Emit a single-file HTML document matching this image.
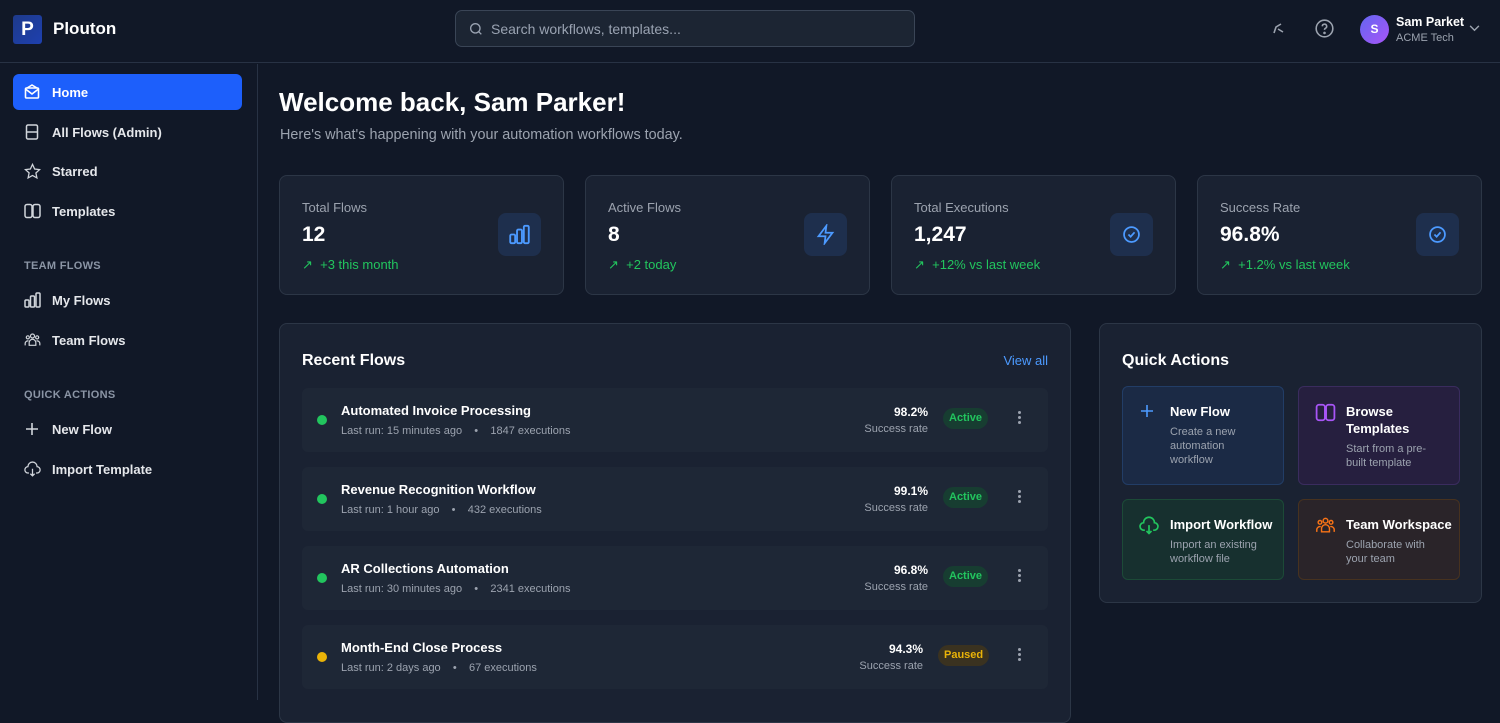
<!DOCTYPE html>
<html><head><meta charset="utf-8"><style>
*{box-sizing:border-box;margin:0;padding:0}
body{width:1500px;height:700px;overflow:hidden;background:#111827;font-family:"Liberation Sans",sans-serif;color:#fff;position:relative}
.hdr{position:absolute;left:0;top:0;width:1500px;height:63px;border-bottom:1px solid #283244;background:#111827}
.logo{position:absolute;left:13px;top:15px;width:29px;height:29px;background:linear-gradient(135deg,#1e3a8a,#1e40af);border-radius:3px;font-weight:bold;font-size:19px;text-align:center;line-height:29px}
.brand{position:absolute;left:53px;top:19px;font-size:17px;font-weight:bold}
.search{position:absolute;left:455px;top:10px;width:460px;height:37px;border:1px solid #3a4556;border-radius:7px;background:#1c2533;color:#9aa3b2;font-size:14px;padding:10px 0 0 35px}
.side{position:absolute;left:0;top:64px;width:258px;height:636px;border-right:1px solid #283244}
.nav{position:absolute;left:13px;width:229px;height:36px;border-radius:6px;font-size:13px;font-weight:bold;color:#e5e7eb;padding:11px 0 0 39px}
.nav svg{position:absolute;left:11px;top:10px}
.nav.act{background:#1d5ffb;color:#fff}
.sec{position:absolute;left:24px;font-size:11px;font-weight:bold;color:#8b95a5;letter-spacing:.3px}
.card{position:absolute;background:#1a2232;border:1px solid #2c3646;border-radius:8px}
.stl{position:absolute;left:22px;top:24px;font-size:13px;color:#9ca3af}
.stv{position:absolute;left:22px;top:47px;font-size:21px;font-weight:bold}
.stc{position:absolute;left:22px;top:81px;font-size:13px;color:#22c55e}
.sti{position:absolute;right:22px;top:37px;width:43px;height:43px;border-radius:8px;background:#1e2f4d}
.sti svg{position:absolute;left:11px;top:11px}
.row{position:absolute;left:22px;width:746px;height:64px;background:#1e2736;border-radius:6px}
.dot{position:absolute;left:15px;top:27px;width:10px;height:10px;border-radius:50%}
.rn{position:absolute;left:39px;top:15px;font-size:13px;font-weight:bold}
.rm{position:absolute;left:39px;top:37px;font-size:11px;color:#9ca3af}
.rp{position:absolute;right:120px;top:17px;font-size:12px;font-weight:bold;text-align:right}
.rs{position:absolute;right:120px;top:35px;font-size:11px;color:#9ca3af}
.badge{position:absolute;top:20px;height:21px;border-radius:11px;font-size:11px;font-weight:bold;padding:4px 6px 0}
.kb{position:absolute;right:26px;top:23px;width:4px}
.kb i{display:block;width:3px;height:3px;background:#9ca3af;border-radius:50%;margin-bottom:2px}
.qa{position:absolute;border-radius:6px;border:1px solid}
.qa svg{position:absolute;left:16px;top:16px}
.qt{position:absolute;left:47px;top:16px;font-size:13px;font-weight:bold;line-height:17px}
.qd{position:absolute;left:47px;font-size:11px;color:#9ca3af;line-height:14px}
</style></head><body>
<div class="hdr">
<div class="logo">P</div><div class="brand">Plouton</div>
<div class="search"><svg style="position:absolute;left:12px;top:10px" width="16" height="16" viewBox="0 0 24 24" fill="none" stroke="#9aa3b2" stroke-width="2"><circle cx="11" cy="11" r="7"/><path d="M20 20l-4-4"/></svg>Search workflows, templates...</div>
<svg style="position:absolute;left:1271px;top:20px" width="16" height="16" viewBox="0 0 16 16" fill="none" stroke="#9ca3af" stroke-width="1.6"><path d="M3 13l2-6 5-3M7 9l5 3"/></svg>
<svg style="position:absolute;left:1314px;top:18px" width="21" height="21" viewBox="0 0 24 24" fill="none" stroke="#9ca3af" stroke-width="1.8"><circle cx="12" cy="12" r="9.5"/><path d="M9.5 9.5a2.5 2.5 0 1 1 3.5 2.3c-.7.4-1 .9-1 1.7"/><circle cx="12" cy="17" r=".6" fill="#9ca3af"/></svg>
<div style="position:absolute;left:1360px;top:15px;width:29px;height:29px;border-radius:50%;background:linear-gradient(135deg,#6366f1,#a855f7);text-align:center;line-height:29px;font-size:12px;font-weight:bold">S</div>
<div style="position:absolute;left:1396px;top:15px;font-size:12.5px;font-weight:bold">Sam Parket</div>
<div style="position:absolute;left:1396px;top:32px;font-size:11px;color:#9ca3af">ACME Tech</div>
<svg style="position:absolute;left:1469px;top:25px" width="11" height="7" viewBox="0 0 12 8" fill="none" stroke="#9ca3af" stroke-width="1.6"><path d="M1 1l5 5 5-5"/></svg>
</div>
<div class="side">
<div class="nav act" style="top:10px"><svg width="16" height="16" viewBox="0 0 16 16" fill="none" stroke="#fff" stroke-width="1.6"><rect x="1.5" y="4" width="13" height="10" rx="1"/><path d="M1.5 5l6.5 5 6.5-5M3 4l5-3 5 3"/></svg>Home</div>
<div class="nav" style="top:50px"><svg width="16" height="16" viewBox="0 0 16 16" fill="none" stroke="#d1d5db" stroke-width="1.5"><rect x="2.5" y="1" width="11" height="14" rx="1.5"/><path d="M2.5 8h11"/></svg>All Flows (Admin)</div>
<div class="nav" style="top:89px"><svg width="17" height="17" viewBox="0 0 24 24" fill="none" stroke="#d1d5db" stroke-width="1.8"><path d="M12 2l3 6.5 7 .8-5.2 4.8 1.4 7L12 17.6 5.8 21l1.4-7L2 9.3l7-.8z"/></svg>Starred</div>
<div class="nav" style="top:129px"><svg width="17" height="16" viewBox="0 0 17 16" fill="none" stroke="#d1d5db" stroke-width="1.5"><rect x="1" y="1.5" width="7" height="13" rx="2"/><rect x="9" y="1.5" width="7" height="13" rx="2"/></svg>Templates</div>
<div class="sec" style="top:196px">TEAM FLOWS</div>
<div class="nav" style="top:218px"><svg width="17" height="16" viewBox="0 0 17 16" fill="none" stroke="#d1d5db" stroke-width="1.5"><rect x="1" y="8" width="4" height="7" rx="1"/><rect x="6.5" y="4" width="4" height="11" rx="1"/><rect x="12" y="1" width="4" height="14" rx="1"/></svg>My Flows</div>
<div class="nav" style="top:258px"><svg width="17" height="16" viewBox="0 0 24 24" fill="none" stroke="#d1d5db" stroke-width="1.8"><circle cx="12" cy="6" r="3"/><circle cx="5" cy="8" r="2.3"/><circle cx="19" cy="8" r="2.3"/><path d="M7 20v-4a5 5 0 0 1 10 0v4zM1 20v-3a4 4 0 0 1 5-3.5M23 20v-3a4 4 0 0 0-5-3.5"/></svg>Team Flows</div>
<div class="sec" style="top:325px">QUICK ACTIONS</div>
<div class="nav" style="top:347px"><svg width="16" height="16" viewBox="0 0 16 16" fill="none" stroke="#d1d5db" stroke-width="1.6"><path d="M8 2v12M2 8h12"/></svg>New Flow</div>
<div class="nav" style="top:387px"><svg width="17" height="17" viewBox="0 0 24 24" fill="none" stroke="#d1d5db" stroke-width="1.8"><path d="M7 17H6a4.5 4.5 0 0 1-.5-9 6.5 6.5 0 0 1 13 0A4.5 4.5 0 0 1 18 17h-1"/><path d="M12 11v10M9 18l3 3 3-3"/></svg>Import Template</div>
</div>

<div style="position:absolute;left:279px;top:87px;font-size:26px;font-weight:bold">Welcome back, Sam Parker!</div>
<div style="position:absolute;left:280px;top:127px;font-size:14.4px;color:#9ca3af">Here's what's happening with your automation workflows today.</div>

<div class="card" style="left:279px;top:175px;width:285px;height:120px"><div class="stl">Total Flows</div><div class="stv">12</div><div class="stc">↗&nbsp; +3 this month</div><div class="sti"><svg width="21" height="21" viewBox="0 0 17 16" fill="none" stroke="#4c9aff" stroke-width="1.5"><rect x="1" y="8" width="4" height="7" rx="1"/><rect x="6.5" y="4" width="4" height="11" rx="1"/><rect x="12" y="1" width="4" height="14" rx="1"/></svg></div></div>
<div class="card" style="left:585px;top:175px;width:285px;height:120px"><div class="stl">Active Flows</div><div class="stv">8</div><div class="stc">↗&nbsp; +2 today</div><div class="sti"><svg width="21" height="21" viewBox="0 0 24 24" fill="none" stroke="#4c9aff" stroke-width="2"><path d="M13 2L4 14h8l-1 8 9-12h-8z"/></svg></div></div>
<div class="card" style="left:891px;top:175px;width:285px;height:120px"><div class="stl">Total Executions</div><div class="stv">1,247</div><div class="stc">↗&nbsp; +12% vs last week</div><div class="sti"><svg width="21" height="21" viewBox="0 0 24 24" fill="none" stroke="#4c9aff" stroke-width="2"><circle cx="12" cy="12" r="8.5"/><path d="M8.5 12l2.5 2.5 4.5-5"/></svg></div></div>
<div class="card" style="left:1197px;top:175px;width:285px;height:120px"><div class="stl">Success Rate</div><div class="stv">96.8%</div><div class="stc">↗&nbsp; +1.2% vs last week</div><div class="sti"><svg width="21" height="21" viewBox="0 0 24 24" fill="none" stroke="#4c9aff" stroke-width="2"><circle cx="12" cy="12" r="8.5"/><path d="M8.5 12l2.5 2.5 4.5-5"/></svg></div></div>

<div class="card" style="left:279px;top:323px;width:792px;height:400px">
<div style="position:absolute;left:22px;top:28px;font-size:16px;font-weight:bold">Recent Flows</div>
<div style="position:absolute;right:22px;top:29px;font-size:13px;color:#4c9aff">View all</div>
<div class="row" style="top:64px"><div class="dot" style="background:#22c55e"></div><div class="rn">Automated Invoice Processing</div><div class="rm">Last run: 15 minutes ago &nbsp;&nbsp; • &nbsp;&nbsp; 1847 executions</div><div class="rp">98.2%</div><div class="rs">Success rate</div><div class="badge" style="left:641px;background:#173d31;color:#22c55e">Active</div><div class="kb"><i></i><i></i><i></i></div></div>
<div class="row" style="top:143px"><div class="dot" style="background:#22c55e"></div><div class="rn">Revenue Recognition Workflow</div><div class="rm">Last run: 1 hour ago &nbsp;&nbsp; • &nbsp;&nbsp; 432 executions</div><div class="rp">99.1%</div><div class="rs">Success rate</div><div class="badge" style="left:641px;background:#173d31;color:#22c55e">Active</div><div class="kb"><i></i><i></i><i></i></div></div>
<div class="row" style="top:222px"><div class="dot" style="background:#22c55e"></div><div class="rn">AR Collections Automation</div><div class="rm">Last run: 30 minutes ago &nbsp;&nbsp; • &nbsp;&nbsp; 2341 executions</div><div class="rp">96.8%</div><div class="rs">Success rate</div><div class="badge" style="left:641px;background:#173d31;color:#22c55e">Active</div><div class="kb"><i></i><i></i><i></i></div></div>
<div class="row" style="top:301px"><div class="dot" style="background:#eab308"></div><div class="rn">Month-End Close Process</div><div class="rm">Last run: 2 days ago &nbsp;&nbsp; • &nbsp;&nbsp; 67 executions</div><div class="rp" style="right:125px">94.3%</div><div class="rs" style="right:125px">Success rate</div><div class="badge" style="left:636px;background:#3a3220;color:#eab308">Paused</div><div class="kb"><i></i><i></i><i></i></div></div>
</div>

<div class="card" style="left:1099px;top:323px;width:383px;height:280px">
<div style="position:absolute;left:22px;top:28px;font-size:16px;font-weight:bold">Quick Actions</div>
<div class="qa" style="left:22px;top:62px;width:162px;height:99px;background:#1b2a45;border-color:#223d66"><svg width="16" height="16" viewBox="0 0 16 16" fill="none" stroke="#4c9aff" stroke-width="1.6"><path d="M8 2v12M2 8h12"/></svg><div class="qt">New Flow</div><div class="qd" style="top:38px">Create a new<br>automation<br>workflow</div></div>
<div class="qa" style="left:198px;top:62px;width:162px;height:99px;background:#261f3f;border-color:#3a2c5e"><svg width="21" height="19" viewBox="0 0 17 16" fill="none" stroke="#a855f7" stroke-width="1.5"><rect x="1" y="1.5" width="7" height="13" rx="2"/><rect x="9" y="1.5" width="7" height="13" rx="2"/></svg><div class="qt">Browse<br>Templates</div><div class="qd" style="top:55px">Start from a pre-<br>built template</div></div>
<div class="qa" style="left:22px;top:175px;width:162px;height:81px;background:#17302f;border-color:#1c4a37"><svg width="20" height="20" viewBox="0 0 24 24" fill="none" stroke="#22c55e" stroke-width="2"><path d="M7 17H6a4.5 4.5 0 0 1-.5-9 6.5 6.5 0 0 1 13 0A4.5 4.5 0 0 1 18 17h-1"/><path d="M12 11v10M9 18l3 3 3-3"/></svg><div class="qt">Import Workflow</div><div class="qd" style="top:38px">Import an existing<br>workflow file</div></div>
<div class="qa" style="left:198px;top:175px;width:162px;height:81px;background:#2a2429;border-color:#47321f"><svg width="21" height="19" viewBox="0 0 24 24" fill="none" stroke="#f97316" stroke-width="1.8"><circle cx="12" cy="6" r="3"/><circle cx="5" cy="8" r="2.3"/><circle cx="19" cy="8" r="2.3"/><path d="M7 20v-4a5 5 0 0 1 10 0v4zM1 20v-3a4 4 0 0 1 5-3.5M23 20v-3a4 4 0 0 0-5-3.5"/></svg><div class="qt">Team Workspace</div><div class="qd" style="top:38px">Collaborate with<br>your team</div></div>
</div>
</body></html>
